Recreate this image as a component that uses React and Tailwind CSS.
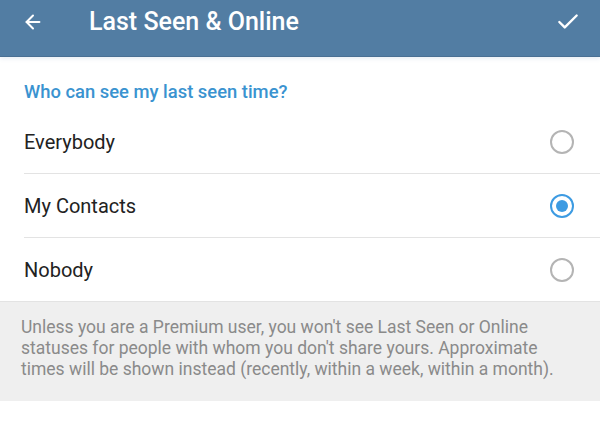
import { ArrowLeft, Check } from "lucide-react";

const options = [
  { id: "everybody", label: "Everybody", selected: false },
  { id: "contacts", label: "My Contacts", selected: true },
  { id: "nobody", label: "Nobody", selected: false },
];

const Radio = ({ checked }) =>
  checked ? (
    <div className="w-[24px] h-[24px] rounded-full border-[2px] border-[#3d9be2] flex items-center justify-center">
      <div className="w-[12px] h-[12px] rounded-full bg-[#3d9be2]" />
    </div>
  ) : (
    <div className="w-[24px] h-[24px] rounded-full border-[2px] border-[#b4b4b4]" />
  );

const App = () => {
  return (
    <div className="w-[600px] h-[421px] bg-white flex flex-col font-['Roboto',sans-serif]">
      {/* Header */}
      <div className="relative z-10 h-[57px] bg-[#527da3] text-white flex items-center px-[22px] pb-[13px] border-b border-[#4a7093] shadow-[0_2px_4px_rgba(82,125,163,0.12)]">
        <ArrowLeft className="w-[22px] h-[22px]" strokeWidth={2.2} />
        <h1 className="ml-[45px] text-[25px] font-medium flex-1">Last Seen &amp; Online</h1>
        <Check className="w-[26px] h-[26px] mr-[-3px]" strokeWidth={2.2} />
      </div>

      {/* Options */}
      <div className="pt-[23px]">
        <div className="px-[24px] text-[18.4px] font-medium text-[#3a93d0] leading-[24px] mb-[6px]">
          Who can see my last seen time?
        </div>
        {options.map((item, index) => (
          <div key={item.id}>
            <div className="h-[63px] flex items-center justify-between pl-[24px] pr-[26px]">
              <span className="text-[20px] text-[#222222]">{item.label}</span>
              <Radio checked={item.selected} />
            </div>
            {index < options.length - 1 && (
              <div className="ml-[24px] border-b border-[#e3e3e3]" />
            )}
          </div>
        ))}
      </div>

      {/* Info */}
      <div className="bg-[#efefef] h-[100px] border-t border-[#e3e3e3] px-[21px] pt-[15px] text-[17.5px] leading-[21px] text-[#8a8a8a]">
        Unless you are a Premium user, you won't see Last Seen or Online statuses for people with whom you don't share yours. Approximate times will be shown instead (recently, within a week, within a month).
      </div>
    </div>
  );
};

export default App;
